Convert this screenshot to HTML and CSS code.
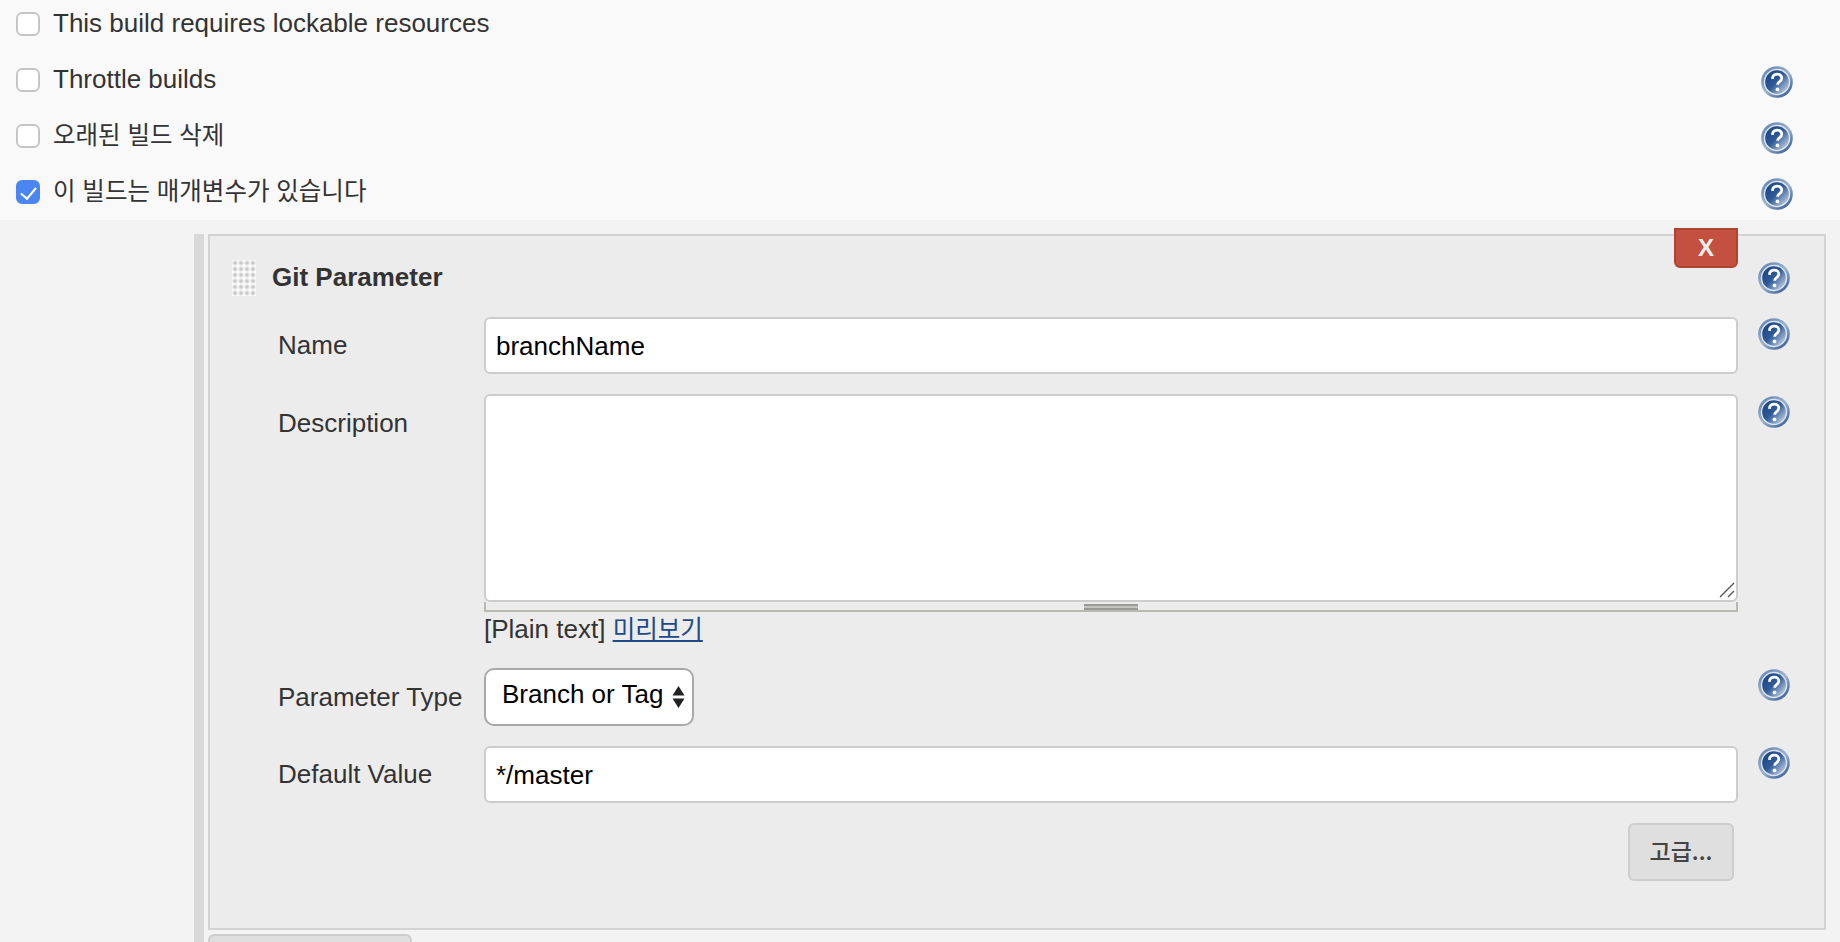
FILE: index.html
```html
<!DOCTYPE html>
<html lang="ko">
<head>
<meta charset="utf-8">
<title>Git Parameter</title>
<link rel="stylesheet" href="styles.css">
</head>
<body>
<svg class="defs" width="0" height="0" aria-hidden="true">
  <defs>
    <linearGradient id="helpFill" x1="0.15" y1="0.15" x2="0.9" y2="0.85">
      <stop offset="0" stop-color="#1f4886"/>
      <stop offset="0.45" stop-color="#2f5a98"/>
      <stop offset="1" stop-color="#b3c5dc"/>
    </linearGradient>
    <linearGradient id="helpRim" x1="0.1" y1="0" x2="0.9" y2="1">
      <stop offset="0" stop-color="#5d80ae"/>
      <stop offset="0.5" stop-color="#9fb4d0"/>
      <stop offset="1" stop-color="#2b5592"/>
    </linearGradient>
    <symbol id="help" viewBox="0 0 32 32">
      <circle cx="16" cy="16" r="15.8" fill="url(#helpRim)"/>
      <circle cx="16" cy="16" r="13.2" fill="#dbe4ef"/>
      <circle cx="16" cy="16" r="11.8" fill="url(#helpFill)"/>
      <path d="M11.4 12.8c.2-2.9 2.2-4.6 4.9-4.6 2.7 0 4.5 1.6 4.5 3.8 0 1.7-1 2.7-2.2 3.6-1.3.9-2 1.6-2 3.2" fill="none" stroke="#fff" stroke-width="2.8"/>
      <circle cx="16.5" cy="23.4" r="1.9" fill="#fff"/>
    </symbol>
  </defs>
</svg>

<section class="options">
  <div class="option">
    <input class="check" type="checkbox" id="o1"><label for="o1">This build requires lockable resources</label>
  </div>
  <div class="option">
    <input class="check" type="checkbox" id="o2"><label for="o2">Throttle builds</label>
    <svg class="help help-top"><use href="#help"/></svg>
  </div>
  <div class="option">
    <input class="check" type="checkbox" id="o3"><label class="ko" for="o3">오래된 빌드 삭제</label>
    <svg class="help help-top"><use href="#help"/></svg>
  </div>
  <div class="option">
    <input class="check" type="checkbox" id="o4" checked><label class="ko" for="o4">이 빌드는 매개변수가 있습니다</label>
    <svg class="help help-top"><use href="#help"/></svg>
  </div>
</section>

<main class="params">
  <div class="rail"></div>
  <div class="stack">
    <section class="panel">
      <button class="delete" type="button">X</button>
      <div class="head">
        <span class="handle"></span>
        <h2 class="title">Git Parameter</h2>
      </div>
      <div class="help-cell"><svg class="help help-head"><use href="#help"/></svg></div>

      <label class="label" for="f1">Name</label>
      <input class="text" id="f1" type="text" value="branchName">
      <div class="help-cell"><svg class="help"><use href="#help"/></svg></div>

      <label class="label label-top" for="f2">Description</label>
      <div class="desc">
        <div class="area-wrap">
          <textarea class="area" id="f2"></textarea>
          <svg class="resizer" width="16" height="16" viewBox="0 0 16 16"><path d="M1 15L15 1M9 15l6-6" stroke="#555" stroke-width="1.4" fill="none"/></svg>
        </div>
        <div class="grippie"><span class="grip"></span></div>
        <div class="preview">[Plain text] <a class="ko" href="#">미리보기</a></div>
      </div>
      <div class="help-cell"><svg class="help help-desc"><use href="#help"/></svg></div>

      <label class="label" for="f3">Parameter Type</label>
      <div><select class="select" id="f3"><option>Branch or Tag</option></select></div>
      <div class="help-cell"><svg class="help"><use href="#help"/></svg></div>

      <label class="label" for="f4">Default Value</label>
      <input class="text" id="f4" type="text" value="*/master">
      <div class="help-cell"><svg class="help"><use href="#help"/></svg></div>

      <div class="actions"><button class="advanced" type="button">고급...</button></div>
    </section>
    <button class="add" type="button"></button>
  </div>
</main>
</body>
</html>
```
FILE: styles.css
```css
* { box-sizing: border-box; }

html, body {
  margin: 0;
  height: 942px;
  overflow: hidden;
}

body {
  background: #f3f3f3;
  color: #333;
  font: 26px/1.2 "Liberation Sans", "Noto Sans CJK KR", sans-serif;
}

.ko { font-size: 24.5px; }

.defs { position: absolute; }

.options {
  height: 220px;
  background: #f9f9f9;
  display: flex;
  flex-direction: column;
  gap: 8px;
  padding-left: 16px;
}

.option {
  height: 48px;
  display: flex;
  align-items: center;
  position: relative;
}

.check {
  appearance: none;
  margin: 0 13px 0 0;
  width: 24px;
  height: 24px;
  border: 2px solid #c6c6c6;
  border-radius: 6px;
  background: #fff;
  position: relative;
  flex: none;
}

.check:checked {
  background: #4a86f1;
  border-color: #4a86f1;
}

.check:checked::after {
  content: "";
  position: absolute;
  left: 6px;
  top: 2px;
  width: 7px;
  height: 13px;
  border: solid #fff;
  border-width: 0 2.5px 2.5px 0;
  transform: rotate(40deg);
}

.help {
  width: 32px;
  height: 32px;
  display: block;
  flex: none;
}

.help-top {
  margin-left: auto;
  margin-right: 47px;
  margin-top: 4px;
}

.params {
  display: flex;
  padding: 14px 0 0 194px;
  gap: 4px;
  height: 722px;
}

.rail {
  width: 10px;
  background: #d9d9d9;
}

.stack {
  width: 1618px;
  display: flex;
  flex-direction: column;
  gap: 4px;
}

.panel {
  position: relative;
  height: 696px;
  flex: none;
  background: #ececec;
  border: 2px solid #d3d3d3;
  padding-left: 22px;
  display: grid;
  grid-template-columns: 252px 1254px 1fr;
  grid-auto-rows: min-content;
  row-gap: 20px;
  align-items: center;
}

.delete {
  position: absolute;
  top: -8px;
  right: 86px;
  width: 64px;
  height: 40px;
  padding: 0;
  background: #c4513f;
  border: 2px solid #ad4533;
  border-radius: 0 0 6px 6px;
  color: #eee;
  font: bold 24px "Liberation Sans", sans-serif;
}

.head {
  grid-column: 1 / 3;
  height: 61px;
  padding-top: 22px;
  display: flex;
  align-items: center;
  gap: 16px;
}

.handle {
  width: 24px;
  height: 36px;
  background: #f9f9f9 radial-gradient(circle at center, #bcbcbc 0, #d6d6d6 1.5px, transparent 3px) 0 0 / 6px 6px;
}

.title {
  margin: 1px 0 0;
  font-size: 26px;
  font-weight: bold;
  color: #333;
}

.help-cell {
  align-self: start;
  padding: 1px 0 0 20px;
}

.help-head { margin-top: 25px; }
.help-desc { margin-top: 1px; }

.label {
  padding-left: 46px;
  padding-top: 1px;
}

.label-top {
  align-self: start;
  padding-top: 14px;
}

.text {
  display: block;
  width: 100%;
  height: 57px;
  padding: 2px 8px 0 10px;
  border: 2px solid #cdcdcd;
  border-radius: 6px;
  background: #fff;
  color: #000;
  font: 26px "Liberation Sans", sans-serif;
  outline: none;
}

.area-wrap {
  position: relative;
}

.area {
  display: block;
  width: 100%;
  height: 208px;
  border: 2px solid #cdcdcd;
  border-radius: 6px;
  background: #fff;
  resize: none;
  outline: none;
  font: 26px "Liberation Sans", sans-serif;
}

.resizer {
  position: absolute;
  right: 3px;
  bottom: 4px;
}

.grippie {
  height: 10px;
  display: flex;
  justify-content: center;
  align-items: flex-end;
  border: solid #b9b9b2;
  border-width: 0 2px 2px;
}

.grip {
  width: 54px;
  height: 6px;
  background: repeating-linear-gradient(#9a9a96 0 2px, #c4c4c2 2px 4px);
}

.preview {
  height: 36px;
  line-height: 34px;
}

.preview a { color: #204a87; }

.select {
  appearance: none;
  display: block;
  width: 210px;
  height: 58px;
  padding: 0 0 6px 16px;
  border: 2px solid #a9a9a9;
  border-radius: 10px;
  background: #fff url("data:image/svg+xml,%3Csvg xmlns='http://www.w3.org/2000/svg' width='13' height='22'%3E%3Cpath d='M6.5 0l6 9.5H.5zM6.5 22l6-9.5H.5z' fill='%23222'/%3E%3C/svg%3E") no-repeat 186px center;
  color: #000;
  font: 26px "Liberation Sans", sans-serif;
  outline: none;
}

.actions {
  grid-column: 2;
  display: flex;
  justify-content: flex-end;
  padding-right: 4px;
}

.advanced {
  width: 106px;
  height: 58px;
  padding: 0 0 4px;
  background: #dfdfdf;
  border: 2px solid #cdcdcd;
  border-radius: 6px;
  color: #444;
  font: 500 23px "Noto Sans CJK KR", sans-serif;
}

.add {
  width: 204px;
  height: 30px;
  flex: none;
  padding: 0;
  background: #dedede;
  border: 2px solid #cdcdcd;
  border-radius: 6px;
}
```
